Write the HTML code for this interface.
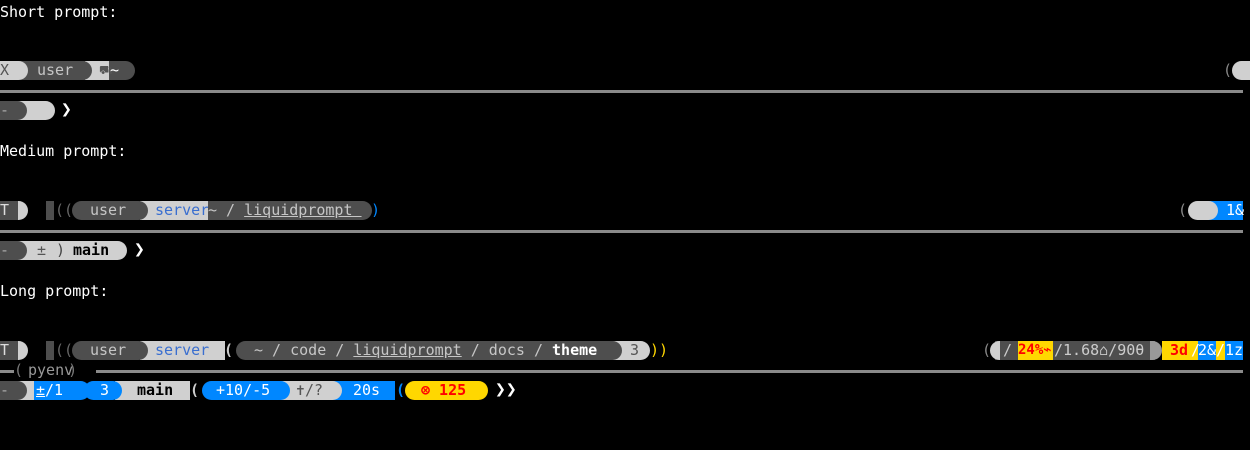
<!DOCTYPE html><html><head><style>
body{margin:0;width:1250px;height:450px;background:#000;overflow:hidden;position:relative;font-family:"DejaVu Sans Mono","Liberation Mono",monospace;font-size:15px;color:#fff}
div{position:absolute;height:19px;line-height:19px;white-space:pre}
.d{background:#4e4e4e}.l{background:#d0d0d0}.b{background:#0087ff}.y{background:#ffd700}
.rr{border-radius:0 10px 10px 0}.rl{border-radius:10px 0 0 10px}.rb{border-radius:10px}
.t{background:none}
.hr{height:3px;background:#8a8a8a;left:0;width:1243px}
</style></head><body>
<div style="left:0;top:3px">Short prompt:</div>
<!-- row1 -->
<div class="d rr" style="left:0;top:61px;width:135px"></div>
<div class="l" style="left:85px;top:61px;width:24px"></div>
<div class="d rr" style="left:18px;top:61px;width:74px"></div>
<div class="l rr" style="left:0;top:61px;width:28px;color:#555">X</div>
<div class="t" style="left:37px;top:61px;color:#c6c6c6">user</div>
<div class="t" style="left:99px;top:61px;color:#555;font-size:12px">⛟</div>
<div class="t" style="left:110px;top:61px;color:#fff">~</div>
<div class="t" style="left:1223px;top:61px;color:#888">(</div>
<div class="l rl" style="left:1232px;top:61px;width:18px"></div>
<div class="hr" style="top:90px"></div>
<div class="l rr" style="left:0;top:101px;width:55px"></div>
<div class="d rr" style="left:0;top:101px;width:27px;color:#aaa">-</div>
<div class="t" style="left:61px;top:100px;font-weight:bold;font-size:18px">❯</div>

<div style="left:0;top:142px">Medium prompt:</div>
<div class="l rr" style="left:0;top:201px;width:28px"></div>
<div class="d" style="left:0;top:201px;width:18px;color:#ddd">T</div>
<div class="d" style="left:46px;top:201px;width:8px"></div>
<div class="t" style="left:55px;top:201px;color:#666">((</div>
<div class="l" style="left:140px;top:201px;width:68px;color:#3a6fd0;padding-left:15px;box-sizing:border-box">server</div>
<div class="d rb" style="left:72px;top:201px;width:76px;color:#c6c6c6;padding-left:18px;box-sizing:border-box">user</div>
<div class="d rr" style="left:208px;top:201px;width:164px;color:#c6c6c6">~ / <u>liquidprompt </u></div>
<div class="t" style="left:371px;top:201px;color:#0087ff">)</div>
<div class="t" style="left:1178px;top:201px;color:#888">(</div>
<div class="b" style="left:1208px;top:201px;width:35px;color:#fff;padding-left:18px;box-sizing:border-box">1&amp;</div>
<div class="l rb" style="left:1188px;top:201px;width:30px"></div>
<div class="hr" style="top:230px"></div>
<div class="l rr" style="left:0;top:241px;width:127px;color:#333"></div>
<div class="d rr" style="left:0;top:241px;width:27px;color:#aaa">-</div>
<div class="t" style="left:37px;top:241px;color:#555">±</div>
<div class="t" style="left:56px;top:241px;color:#444">)</div>
<div class="t" style="left:73px;top:241px;color:#000;font-weight:bold">main</div>
<div class="t" style="left:134px;top:240px;font-weight:bold;font-size:18px">❯</div>

<div style="left:0;top:282px">Long prompt:</div>
<div class="l rr" style="left:0;top:341px;width:28px"></div>
<div class="d" style="left:0;top:341px;width:18px;color:#ddd">T</div>
<div class="d" style="left:46px;top:341px;width:8px"></div>
<div class="t" style="left:55px;top:341px;color:#666">((</div>
<div class="l" style="left:140px;top:341px;width:85px;color:#3a6fd0;padding-left:15px;box-sizing:border-box">server</div>
<div class="d rb" style="left:72px;top:341px;width:76px;color:#c6c6c6;padding-left:18px;box-sizing:border-box">user</div>
<div class="t" style="left:224px;top:341px;color:#ccc;font-weight:bold">(</div>
<div class="l rr" style="left:610px;top:341px;width:40px;color:#555;padding-left:20px;box-sizing:border-box">3</div>
<div class="d rb" style="left:236px;top:341px;width:386px;color:#c6c6c6;padding-left:18px;box-sizing:border-box">~ / code / <u>liquidprompt</u> / docs / <b style="color:#fff">theme</b></div>
<div class="t" style="left:650px;top:341px;color:#ffd700">))</div>
<div class="t" style="left:982px;top:341px;color:#888">(</div>
<div class="d" style="left:995px;top:341px;width:160px"></div>
<div class="l rl" style="left:990px;top:341px;width:10px"></div>
<div class="t" style="left:1003px;top:341px;color:#ccc">/</div>
<div class="y" style="left:1018px;top:341px;width:35px;color:#f00;font-weight:bold;font-size:14px">24%⌁</div>
<div class="t" style="left:1054px;top:341px;color:#ccc">/1.68⌂/90θ</div>
<div class="l rr" style="left:1150px;top:341px;width:12px;background:#999"></div>
<div class="y" style="left:1162px;top:341px;width:81px"></div>
<div class="t" style="left:1170px;top:341px;color:#f00;font-weight:bold">3d</div>
<div class="b" style="left:1198px;top:341px;width:18px;color:#fff">2&amp;</div>
<div class="t" style="left:1191px;top:341px;color:#fff">/</div>
<div class="t" style="left:1216px;top:341px;color:#fff">/</div>
<div class="b" style="left:1225px;top:341px;width:18px;color:#fff">1z</div>
<div class="hr" style="top:370px"></div>
<div class="t" style="left:14px;top:361px;width:82px;background:#000;color:#777">(     )</div>
<div class="t" style="left:28px;top:361px;color:#999">pyenv</div>
<div class="l" style="left:0;top:381px;width:40px"></div>
<div class="d rr" style="left:0;top:381px;width:27px;color:#aaa">-</div>
<div class="l" style="left:115px;top:381px;width:75px;color:#000;font-weight:bold;padding-left:22px;box-sizing:border-box">main</div>
<div class="b rr" style="left:34px;top:381px;width:56px;color:#fff;padding-left:2px;box-sizing:border-box"><u>±</u>/1</div>
<div class="b rb" style="left:84px;top:381px;width:38px;color:#fff;padding-left:16px;box-sizing:border-box">3</div>
<div class="t" style="left:190px;top:381px;color:#ccc;font-weight:bold">(</div>
<div class="b" style="left:320px;top:381px;width:75px;color:#fff;padding-left:33px;box-sizing:border-box">20s</div>
<div class="l rb" style="left:270px;top:381px;width:72px;color:#555;padding-left:26px;box-sizing:border-box">✝/?</div>
<div class="b rb" style="left:202px;top:381px;width:88px;color:#fff;padding-left:14px;box-sizing:border-box">+10/-5</div>
<div class="t" style="left:396px;top:381px;color:#0087ff;font-weight:bold">(</div>
<div class="y rb" style="left:405px;top:381px;width:83px;color:#f00;font-weight:bold;padding-left:16px;box-sizing:border-box">⊗ 125</div>
<div class="t" style="left:495px;top:380px;font-weight:bold;font-size:18px">❯❯</div>
</body></html>
